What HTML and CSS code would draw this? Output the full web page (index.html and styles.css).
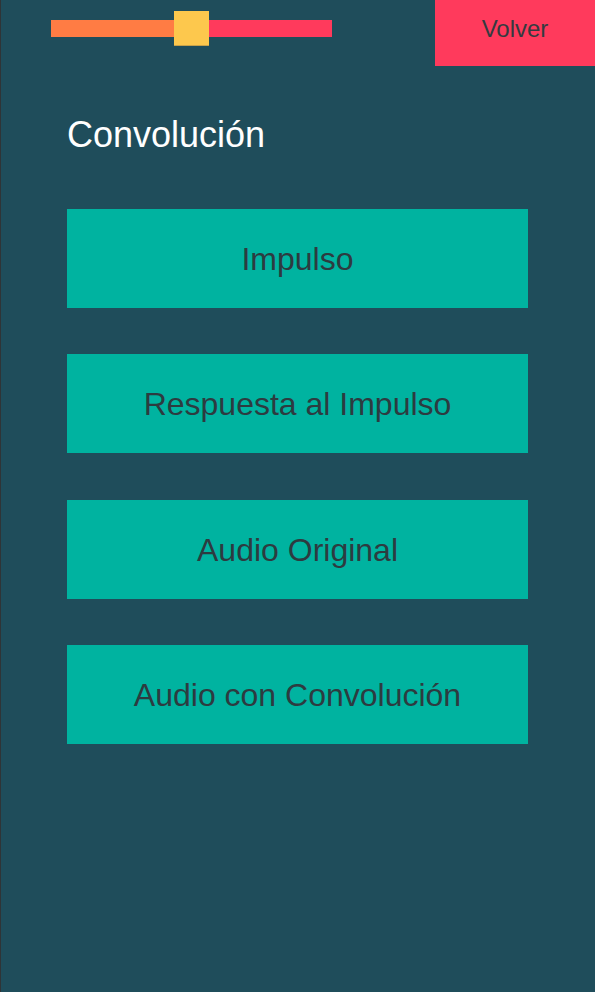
FILE: index.html
```html
<!DOCTYPE html>
<html lang="es">
<head>
<meta charset="utf-8">
<title>Convolución</title>
<link rel="stylesheet" href="styles.css">
</head>
<body>
<div class="screen">
  <header class="topbar">
    <div class="slider">
      <div class="track">
        <div class="fill"></div>
        <div class="rest"></div>
      </div>
      <div class="thumb"></div>
    </div>
    <button class="back">Volver</button>
  </header>
  <main class="content">
    <h1 class="title">Convolución</h1>
    <div class="buttons">
      <button class="action">Impulso</button>
      <button class="action">Respuesta al Impulso</button>
      <button class="action">Audio Original</button>
      <button class="action">Audio con Convolución</button>
    </div>
  </main>
</div>
</body>
</html>
```
FILE: styles.css
```css
html, body {
  margin: 0;
  padding: 0;
  height: 100%;
}
body {
  background: #1f4d5b;
  font-family: "Liberation Sans", Arial, sans-serif;
}
.screen {
  box-sizing: border-box;
  height: 992px;
  border-left: 1px solid #2f3437;
  background: #1f4d5b;
}
.topbar {
  display: flex;
  justify-content: space-between;
  align-items: flex-start;
  height: 66px;
}
.slider {
  position: relative;
  margin-left: 50px;
  margin-top: 20px;
  width: 281px;
  height: 17px;
}
.track {
  display: flex;
  width: 100%;
  height: 100%;
}
.fill {
  width: 124px;
  background: #ff7c44;
}
.rest {
  flex: 1;
  background: #ff3a5c;
}
.thumb {
  position: absolute;
  left: 123px;
  top: -9px;
  width: 35px;
  height: 35px;
  box-sizing: border-box;
  background: #fdc84d;
  border-bottom: 1px solid #c9a24a;
}
.back {
  width: 160px;
  height: 66px;
  border: none;
  margin: 0;
  padding: 0 0 8px 0;
  background: #ff3a5c;
  color: #343a40;
  font-family: "Liberation Sans", Arial, sans-serif;
  font-size: 24px;
  line-height: 24px;
}
.content {
  padding-left: 66px;
}
.title {
  margin: 49px 0 0 0;
  font-weight: normal;
  font-size: 36px;
  line-height: 40px;
  color: #ffffff;
}
.buttons {
  display: flex;
  flex-direction: column;
  gap: 46.3px;
  margin-top: 54px;
}
.action {
  display: flex;
  align-items: center;
  justify-content: center;
  width: 461px;
  height: 99px;
  border: none;
  margin: 0;
  padding: 2px 0 0 0;
  background: #00b3a0;
  color: #2d3b40;
  font-family: "Liberation Sans", Arial, sans-serif;
  font-size: 32px;
}
```
